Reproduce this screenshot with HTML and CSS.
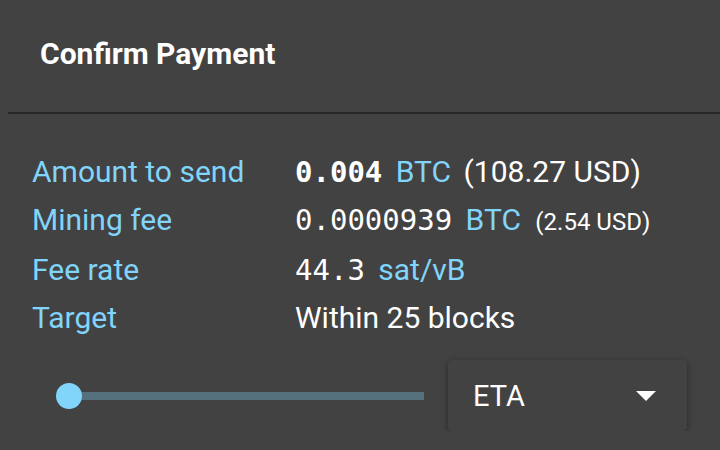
FILE: index.html
```html
<!doctype html>
<html lang="en">
  <head>
    <title>Confirm Payment</title>
    <meta charset="utf-8"/>
    <link rel="stylesheet" href="styles.css">
  </head>
  <body>
    <div id="dialog">
      <h1 class="title">Confirm Payment</h1>
      <div class="divider"></div>

      <div class="details">
        <div class="row">
          <span class="label">Amount to send</span>
          <span class="value"><b class="mono">0.004</b> <span class="unit">BTC</span> <span class="fiat">(108.27 USD)</span></span>
        </div>
        <div class="row">
          <span class="label">Mining fee</span>
          <span class="value"><span class="mono">0.0000939</span> <span class="unit">BTC</span> <span class="fiat small">(2.54 USD)</span></span>
        </div>
        <div class="row">
          <span class="label">Fee rate</span>
          <span class="value"><span class="mono">44.3</span> <span class="unit">sat/vB</span></span>
        </div>
        <div class="row">
          <span class="label">Target</span>
          <span class="value">Within 25 blocks</span>
        </div>
      </div>

      <div class="controls">
        <div class="slider">
          <div class="track"></div>
          <div class="thumb"></div>
        </div>
        <div class="select">
          <span>ETA</span>
          <svg width="20" height="10" viewBox="0 0 20 10"><path d="M0 0 L20 0 L10 10 Z" fill="#fff"/></svg>
        </div>
      </div>
    </div>
  </body>
</html>
```
FILE: styles.css
```css
/* page */
body{
  margin: 0;
  background-color: #424242;
  font-family: Roboto, "Noto Sans", sans-serif;
  color: #fff;
}

/* header */
.title{
  margin: 0;
  padding: 36px 0 40px 40px;
  font-size: 30px;
  line-height: 36px;
  font-weight: 700;
}
.divider{
  margin-left: 8px;
  height: 2px;
  background-color: #262626;
}

/* detail rows */
.details{
  padding: 34px 0 0 32px;
}
.row{
  display: flex;
  font-size: 30px;
  line-height: 48px;
  white-space: pre;
}
.label{
  width: 263px;
  color: #81d4fa;
}
.mono{
  font-family: "DejaVu Sans Mono", monospace;
  font-size: 29px;
  font-weight: 400;
}
b.mono{
  font-weight: 700;
}
.unit{
  margin-left: 6px;
  color: #81d4fa;
}
.fiat{
  margin-left: 5px;
}
.fiat.small{
  font-size: 24px;
  margin-left: 7px;
}

/* slider + dropdown */
.controls{
  display: flex;
  align-items: center;
  margin-top: 18px;
  padding-left: 56px;
}
.slider{
  position: relative;
  width: 368px;
  height: 26px;
  display: flex;
  align-items: center;
}
.track{
  width: 100%;
  height: 8px;
  margin-left: 13px;
  background-color: #55707d;
}
.thumb{
  position: absolute;
  left: 0;
  top: 0;
  width: 26px;
  height: 26px;
  border-radius: 50%;
  background-color: #81d4fa;
}
.select{
  margin-left: 24px;
  width: 239px;
  height: 71px;
  box-sizing: border-box;
  padding: 0 31px 0 25px;
  display: flex;
  align-items: center;
  justify-content: space-between;
  border-radius: 4px;
  background-color: #424242;
  box-shadow: 0 2px 4px rgba(0, 0, 0, 0.3),
              0 1px 8px rgba(0, 0, 0, 0.12);
  font-size: 29px;
}
```
